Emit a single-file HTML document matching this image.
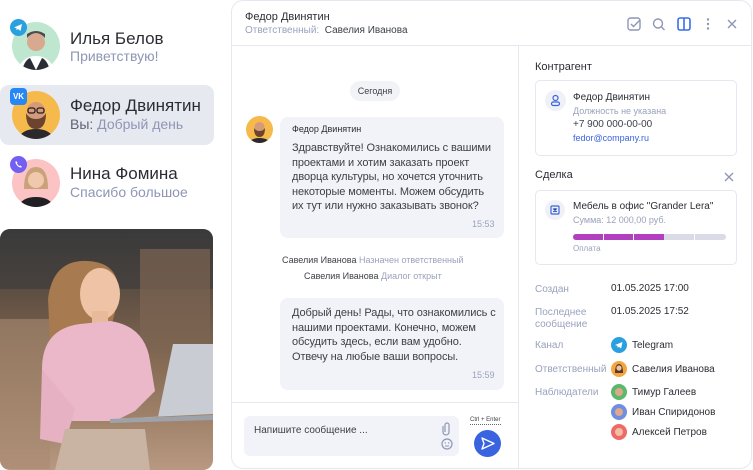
<!DOCTYPE html>
<html><head><meta charset="utf-8"><style>
*{margin:0;padding:0;box-sizing:border-box}
body{width:753px;height:470px;background:#fff;font-family:"Liberation Sans",sans-serif;position:relative;overflow:hidden;color:#2b2d33}
.a{position:absolute}
.name{font-size:17px;color:#2b2d33}
.sub{font-size:14px;color:#8d96b5}
.av{position:absolute;width:48px;height:48px;border-radius:50%;overflow:hidden}
.badge{position:absolute;width:17px;height:17px;border-radius:50%}
.t12{font-size:11px;line-height:14.6px;color:#3d4048;white-space:nowrap;letter-spacing:-0.1px}
.g{color:#9aa2bd}
.lbl{font-size:10px;color:#9aa2bd}
.val{font-size:10px;color:#2b2d33}
.sa{position:absolute;width:16px;height:16px;border-radius:50%;overflow:hidden}
</style></head><body>

<div class="av" style="left:12px;top:22px;background:#bfe6cf">
<svg width="48" height="48"><circle cx="24" cy="20" r="9" fill="#d8a98e"/><path d="M15 16q9-10 18 0l0-4q-9-6-18 0z" fill="#4a4a50"/><path d="M6 48q4-14 18-14t18 14z" fill="#fff"/><path d="M10 48q3-10 8-12l6 12z" fill="#2b2d36"/><path d="M38 48q-3-10-8-12l-6 12z" fill="#2b2d36"/></svg></div>
<div class="badge" style="left:10px;top:19px;background:#2aa0e0"><svg width="17" height="17"><path d="M4 8.5l8-3.5-1.5 7-2.5-2-1.5 1.3v-2z" fill="#fff"/></svg></div>
<div class="a name" style="left:70px;top:29px">Илья Белов</div>
<div class="a sub" style="left:70px;top:48px">Приветствую!</div>

<div class="a" style="left:0;top:85px;width:214px;height:60px;background:#e7e9f1;border-radius:9px"></div>
<div class="av" style="left:12px;top:91px;background:#f6b94b">
<svg width="48" height="48"><circle cx="24" cy="20" r="9" fill="#d49a7a"/><path d="M14 22q0 16 10 16t10-16q-3 6-10 6t-10-6z" fill="#6b4430"/><rect x="16" y="17" width="7" height="5" rx="2" fill="none" stroke="#222" stroke-width="1.3"/><rect x="25" y="17" width="7" height="5" rx="2" fill="none" stroke="#222" stroke-width="1.3"/><path d="M6 48q4-10 18-10t18 10z" fill="#2a2a2e"/></svg></div>
<div class="a" style="left:10px;top:88px;width:17px;height:17px;border-radius:4px;background:#2787f5;color:#fff;font-size:8px;font-weight:bold;line-height:17px;text-align:center">VK</div>
<div class="a name" style="left:70px;top:96px">Федор Двинятин</div>
<div class="a sub" style="left:70px;top:116px"><span style="color:#5f6474">Вы:</span> Добрый день</div>

<div class="av" style="left:12px;top:159px;background:#fbc3c3">
<svg width="48" height="48"><path d="M12 30q0-22 12-22t12 22z" fill="#c9a27a"/><circle cx="24" cy="21" r="8" fill="#f0c9ad"/><path d="M6 48q4-10 18-10t18 10z" fill="#1f1f24"/></svg></div>
<div class="badge" style="left:10px;top:156px;background:#7360f2"><svg width="17" height="17"><path d="M6 5q-1 1 0 3t3 3q2 1 3 0l-1.5-1.5-1 .5q-2-1-2.5-2.5l.5-1z" fill="#fff"/></svg></div>
<div class="a name" style="left:70px;top:164px">Нина Фомина</div>
<div class="a sub" style="left:70px;top:184px">Спасибо большое</div>

<div class="a" style="left:0;top:229px;width:213px;height:241px;border-radius:10px;overflow:hidden;background:linear-gradient(180deg,#3b3a38 0%,#6a5647 35%,#8b6f58 60%,#b89880 100%)">
<svg width="213" height="241">
<rect x="0" y="0" width="213" height="60" fill="#3a3b3c" opacity=".6"/>
<rect x="140" y="20" width="70" height="100" fill="#7d6552" opacity=".7"/>
<rect x="0" y="90" width="50" height="150" fill="#a88a72" opacity=".6"/>
<path d="M48 70q5-40 40-38t30 40l-8 30-60 10z" fill="#a87a4f"/>
<ellipse cx="100" cy="65" rx="20" ry="26" fill="#efc4a6"/>
<rect x="92" y="82" width="16" height="20" fill="#e8b99b"/>
<path d="M42 140q0-40 38-45l30-3q35 5 40 40l5 30-20 20-20 10h-55l-8-20z" fill="#eab8c8"/>
<path d="M42 140l-2 70 25 5 10-35z" fill="#e6b2c3"/>
<path d="M65 200h80l5 41h-95z" fill="#c9b3a2"/>
<path d="M108 190l105-5v-70l-40 0-15 73z" fill="#c9cdd3"/>
<path d="M110 190l103-4v5l-103 3z" fill="#9ea3ab"/>
</svg></div>

<div class="a" style="left:231px;top:0;width:521px;height:469px;border:1px solid #e6e8ef;border-radius:12px"></div>
<div class="a" style="left:231px;top:45px;width:521px;height:1px;background:#e6e8ef"></div>
<div class="a" style="left:518px;top:46px;width:1px;height:423px;background:#e6e8ef"></div>
<div class="a" style="left:231px;top:402px;width:287px;height:1px;background:#e6e8ef"></div>

<div class="a" style="left:245px;top:11px;font-size:11px;color:#2b2d33">Федор Двинятин</div>
<div class="a" style="left:245px;top:25px;font-size:10px;color:#9aa2bd">Ответственный:&nbsp; <span style="color:#3d4048">Савелия Иванова</span></div>

<svg class="a" style="left:626px;top:16px" width="115" height="18">
<rect x="2" y="2" width="12" height="12" rx="2.5" fill="none" stroke="#8d96b5" stroke-width="1.4"/><path d="M5 8l2.5 2.5 6-6" fill="none" stroke="#8d96b5" stroke-width="1.4"/>
<circle cx="32" cy="7.5" r="4.5" fill="none" stroke="#8d96b5" stroke-width="1.4"/><path d="M35.5 11l3 3" stroke="#8d96b5" stroke-width="1.4"/>
<rect x="52" y="2" width="12" height="12" rx="2" fill="none" stroke="#3a6ee8" stroke-width="1.6"/><path d="M58 2v12" stroke="#3a6ee8" stroke-width="1.6"/>
<circle cx="82" cy="3.5" r="1.2" fill="#8d96b5"/><circle cx="82" cy="8" r="1.2" fill="#8d96b5"/><circle cx="82" cy="12.5" r="1.2" fill="#8d96b5"/>
<path d="M102 4l8 8M110 4l-8 8" stroke="#8d96b5" stroke-width="1.4"/>
</svg>

<div class="a" style="left:350px;top:81px;width:50px;height:20px;border-radius:10px;background:#f2f3f7;font-size:9px;line-height:20px;text-align:center;color:#3d4048">Сегодня</div>

<div class="a" style="left:246px;top:116px;width:27px;height:27px;border-radius:50%;background:#f6b94b;overflow:hidden"><svg width="27" height="27"><circle cx="13.5" cy="11" r="5" fill="#d49a7a"/><path d="M8 12q0 9 5.5 9t5.5-9q-2 3-5.5 3t-5.5-3z" fill="#6b4430"/><path d="M3 27q2-5 10.5-5t10.5 5z" fill="#2a2a2e"/></svg></div>
<div class="a" style="left:280px;top:117px;width:224px;height:121px;background:#f2f3f8;border-radius:8px"></div>
<div class="a" style="left:292px;top:124px;font-size:9px;color:#2b2d33">Федор Двинятин</div>
<div class="a t12" style="left:292px;top:141px">Здравствуйте! Ознакомились с вашими<br>проектами и хотим заказать проект<br>дворца культуры, но хочется уточнить<br>некоторые моменты. Можем обсудить<br>их тут или нужно заказывать звонок?</div>
<div class="a" style="left:472px;top:219px;font-size:9px;color:#9aa2bd">15:53</div>

<div class="a" style="left:282px;top:255px;font-size:9px;color:#3d4048">Савелия Иванова <span class="g">Назначен ответственный</span></div>
<div class="a" style="left:304px;top:271px;font-size:9px;color:#3d4048">Савелия Иванова <span class="g">Диалог открыт</span></div>

<div class="a" style="left:280px;top:298px;width:224px;height:92px;background:#f2f3f8;border-radius:8px"></div>
<div class="a t12" style="left:292px;top:306px">Добрый день! Рады, что ознакомились с<br>нашими проектами. Конечно, можем<br>обсудить здесь, если вам удобно.<br>Отвечу на любые ваши вопросы.</div>
<div class="a" style="left:472px;top:370px;font-size:9px;color:#9aa2bd">15:59</div>

<div class="a" style="left:244px;top:416px;width:215px;height:40px;background:#f2f3f8;border-radius:6px"></div>
<div class="a" style="left:254px;top:425px;font-size:10px;color:#3d4048">Напишите сообщение ...</div>
<svg class="a" style="left:440px;top:421px" width="14" height="32"><path d="M5 11V4a2 2 0 0 1 4 0v7a3 3 0 0 1-6 0V5" fill="none" stroke="#8d96b5" stroke-width="1.2"/><circle cx="7" cy="23" r="5" fill="none" stroke="#8d96b5" stroke-width="1.2"/><circle cx="5.3" cy="22" r=".7" fill="#8d96b5"/><circle cx="8.7" cy="22" r=".7" fill="#8d96b5"/><path d="M5 25h4" stroke="#8d96b5" stroke-width="1"/></svg>
<div class="a" style="left:470px;top:417px;font-size:6px;color:#3d4048;border-bottom:1px dotted #666;padding-bottom:1px">Ctrl + Enter</div>
<div class="a" style="left:474px;top:430px;width:27px;height:27px;border-radius:50%;background:#3a63e0"><svg width="27" height="27"><path d="M8 8l12 5.5L8 19l2-5.5z" fill="none" stroke="#fff" stroke-width="1.4" stroke-linejoin="round"/></svg></div>

<div class="a" style="left:535px;top:61px;font-size:11px;color:#2b2d33">Контрагент</div>
<div class="a" style="left:535px;top:80px;width:202px;height:76px;border:1px solid #e6e8ef;border-radius:5px"></div>
<div class="a" style="left:545px;top:90px;width:21px;height:21px;border-radius:50%;background:#f0f1f6"><svg width="21" height="21"><circle cx="10.5" cy="8" r="2.5" fill="none" stroke="#3a63e0" stroke-width="1.2"/><rect x="6.5" y="12" width="8" height="3.5" rx="1.7" fill="none" stroke="#3a63e0" stroke-width="1.2"/></svg></div>
<div class="a" style="left:573px;top:92px;font-size:10px;color:#2b2d33">Федор Двинятин</div>
<div class="a" style="left:573px;top:106px;font-size:9px;color:#9aa2bd">Должность не указана</div>
<div class="a" style="left:573px;top:119px;font-size:10px;color:#3d4048">+7 900 000-00-00</div>
<div class="a" style="left:573px;top:133px;font-size:9px;color:#3a63e0">fedor@company.ru</div>

<div class="a" style="left:535px;top:169px;font-size:11px;color:#2b2d33">Сделка</div>
<svg class="a" style="left:724px;top:172px" width="10" height="10"><path d="M1 1l8 8M9 1l-8 8" stroke="#8d96b5" stroke-width="1.3"/></svg>
<div class="a" style="left:535px;top:190px;width:202px;height:75px;border:1px solid #e6e8ef;border-radius:5px"></div>
<div class="a" style="left:545px;top:200px;width:20px;height:20px;border-radius:50%;background:#f0f1f6"><svg width="20" height="20"><rect x="6" y="6" width="8" height="8" rx="1" fill="none" stroke="#3a63e0" stroke-width="1.2"/><path d="M8 8.5l2 2 2-2M8 11.5h4" stroke="#3a63e0" stroke-width="1"/></svg></div>
<div class="a" style="left:573px;top:201px;font-size:10px;color:#2b2d33">Мебель в офис "Grander Lera"</div>
<div class="a" style="left:573px;top:215px;font-size:9px;color:#9aa2bd">Сумма: 12 000,00 руб.</div>
<div class="a" style="left:573px;top:234px;width:153px;height:6px;border-radius:3px;background:#d9dce6;overflow:hidden">
<div class="a" style="left:0;top:0;width:91px;height:6px;background:#b23fc0"></div>
<div class="a" style="left:30px;top:0;width:1px;height:6px;background:#fff"></div>
<div class="a" style="left:60px;top:0;width:1px;height:6px;background:#fff"></div>
<div class="a" style="left:121px;top:0;width:1px;height:6px;background:#fff"></div></div>
<div class="a" style="left:573px;top:244px;font-size:8px;color:#9aa2bd">Оплата</div>

<div class="a lbl" style="left:535px;top:284px">Создан</div>
<div class="a val" style="left:611px;top:283px">01.05.2025 17:00</div>
<div class="a lbl" style="left:535px;top:307px;line-height:12px">Последнее<br>сообщение</div>
<div class="a val" style="left:611px;top:306px">01.05.2025 17:52</div>
<div class="a lbl" style="left:535px;top:340px">Канал</div>
<div class="sa" style="left:611px;top:337px;background:#2aa0e0"><svg width="16" height="16"><path d="M4 8l7.5-3-1.4 6.5-2.3-1.8-1.3 1.2v-2z" fill="#fff"/></svg></div>
<div class="a val" style="left:632px;top:340px">Telegram</div>
<div class="a lbl" style="left:535px;top:364px">Ответственный</div>
<div class="sa" style="left:611px;top:361px;background:#f2a63f"><svg width="16" height="16"><path d="M4 12q0-9 4-9t4 9z" fill="#5a3a26"/><circle cx="8" cy="7" r="2.6" fill="#efc3a4"/></svg></div>
<div class="a val" style="left:632px;top:364px">Савелия Иванова</div>
<div class="a lbl" style="left:535px;top:387px">Наблюдатели</div>
<div class="sa" style="left:611px;top:384px;background:#5cb86a"><svg width="16" height="16"><circle cx="8" cy="8" r="4" fill="#e0a88a"/></svg></div>
<div class="a val" style="left:632px;top:387px">Тимур Галеев</div>
<div class="sa" style="left:611px;top:404px;background:#6f8ee0"><svg width="16" height="16"><circle cx="8" cy="8" r="4" fill="#e0a88a"/></svg></div>
<div class="a val" style="left:632px;top:407px">Иван Спиридонов</div>
<div class="sa" style="left:611px;top:424px;background:#ee6a6a"><svg width="16" height="16"><circle cx="8" cy="8" r="4" fill="#f0c0a0"/></svg></div>
<div class="a val" style="left:632px;top:427px">Алексей Петров</div>

</body></html>
